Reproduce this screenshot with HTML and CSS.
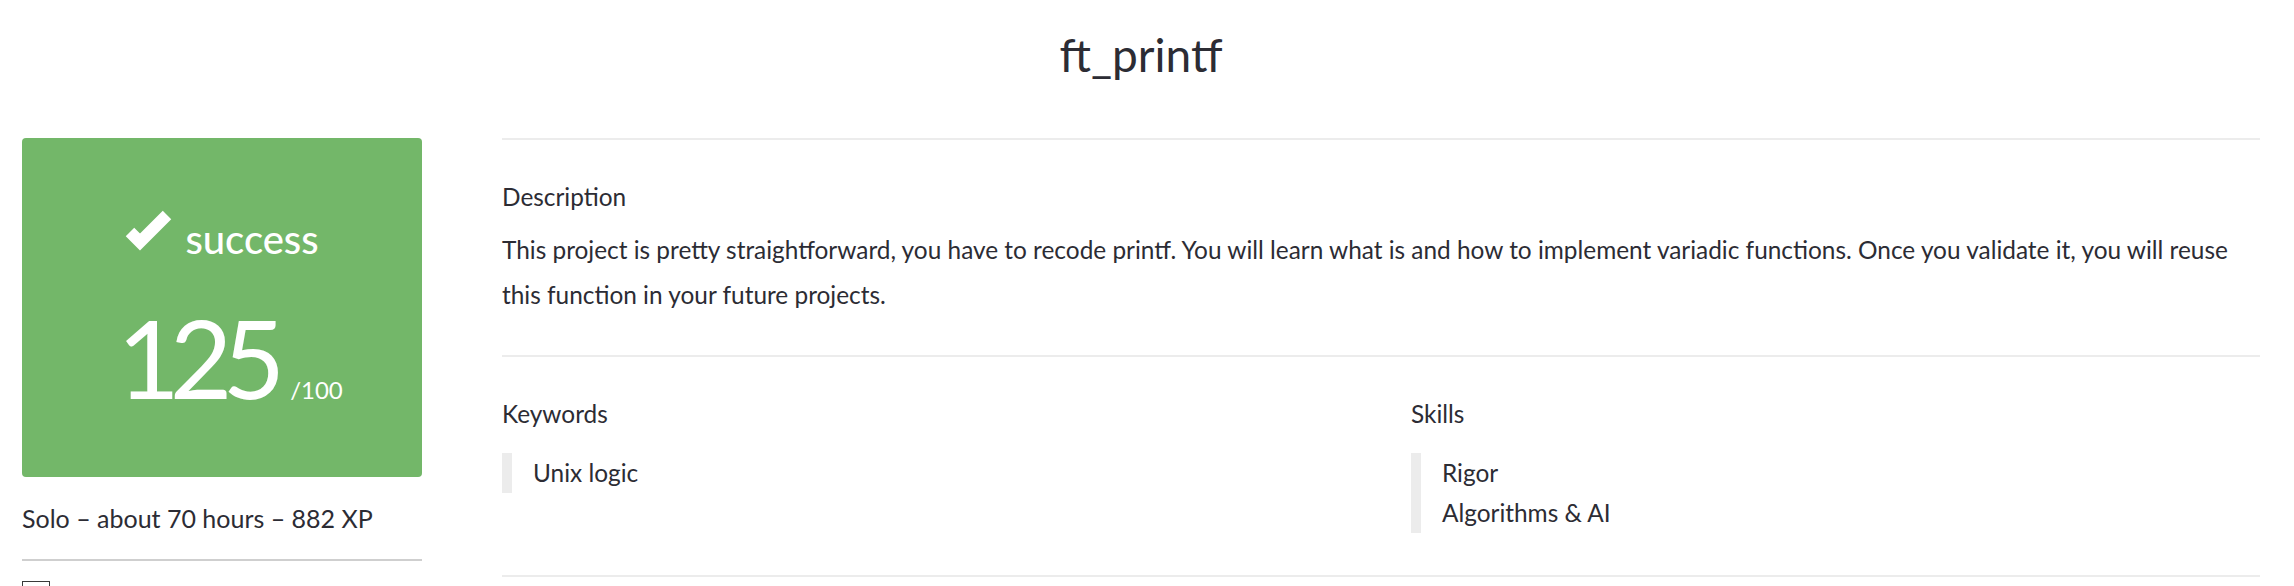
FILE: index.html
```html
<!DOCTYPE html>
<html lang="en">
<head>
<meta charset="utf-8">
<title>ft_printf</title>
<link rel="stylesheet" href="styles.css">
</head>
<body>
<h1 class="title">ft_printf</h1>
<div class="layout">
  <aside class="side">
    <div class="mark">
      <div class="status">
        <svg class="check" width="48" height="41" viewBox="0 0 48 41" aria-hidden="true"><polyline points="5,22 15,32 42,5" fill="none" stroke="#fff" stroke-width="12" stroke-linejoin="miter" stroke-miterlimit="10"/></svg>
        <span class="status-text">success</span>
      </div>
      <div class="score"><span class="score-num">125</span><span class="score-max">/100</span></div>
    </div>
    <div class="meta">Solo – about 70 hours – 882 XP</div>
    <div class="side-rule"></div>
    <div class="checkbox"></div>
  </aside>
  <main class="main">
    <section class="section">
      <div class="label">Description</div>
      <p class="desc">This project is pretty straightforward, you have to recode printf. You will learn what is and how to implement variadic functions. Once you validate it, you will reuse this function in your future projects.</p>
    </section>
    <section class="section section-last">
      <div class="cols">
        <div class="col">
          <div class="label">Keywords</div>
          <ul class="tags"><li>Unix logic</li></ul>
        </div>
        <div class="col">
          <div class="label">Skills</div>
          <ul class="tags"><li>Rigor</li><li>Algorithms &amp; AI</li></ul>
        </div>
      </div>
    </section>
  </main>
</div>
</body>
</html>
```
FILE: styles.css
```css
html, body {
  background: #fff;
}
body {
  margin: 0;
  padding: 27px 34px 0 22px;
  font-family: "Lato", "Liberation Sans", sans-serif;
  color: #2c2c34;
  overflow: hidden;
  height: 586px;
  box-sizing: border-box;
}
.title {
  margin: 0;
  text-align: center;
  font-size: 46px;
  line-height: 56px;
  font-weight: 400;
}
.layout {
  display: flex;
  align-items: flex-start;
  gap: 80px;
  margin-top: 55px;
}
.side {
  flex: none;
  width: 400px;
}
.mark {
  box-sizing: border-box;
  height: 339px;
  padding-top: 77px;
  background: #73b769;
  border-radius: 4px;
  color: #fff;
}
.status {
  display: flex;
  justify-content: center;
  align-items: flex-start;
  gap: 12px;
  height: 48px;
}
.check {
  margin-top: -5px;
  flex: none;
}
.status-text {
  font-size: 40px;
  line-height: 48px;
  font-weight: 500;
}
.score {
  display: flex;
  justify-content: center;
  align-items: baseline;
  margin-top: 42px;
  padding-left: 16px;
  line-height: 104px;
}
.score-num {
  font-size: 108px;
  font-weight: 400;
  letter-spacing: -10px;
}
.score-max {
  font-size: 24px;
  line-height: 24px;
  margin-left: 15px;
  font-weight: 400;
}
.meta {
  margin-top: 21px;
  font-size: 25px;
  line-height: 40px;
}
.side-rule {
  margin-top: 21px;
  border-top: 2px solid #cfcfcf;
}
.checkbox {
  margin-top: 20px;
  width: 28px;
  height: 28px;
  box-sizing: border-box;
  border: 1px solid #3a3a3a;
}
.main {
  flex: 1;
  min-width: 0;
}
.section {
  border-top: 2px solid #ececec;
  padding: 37px 0 38px;
}
.section-last {
  border-bottom: 2px solid #ececec;
  padding-bottom: 42px;
}
.label {
  font-size: 24.4px;
  line-height: 40px;
}
.desc {
  margin: 10px 0 0;
  font-size: 24.4px;
  line-height: 45px;
}
.cols {
  display: grid;
  grid-template-columns: 1fr 1fr;
  column-gap: 60px;
}
.tags {
  list-style: none;
  margin: 19px 0 0;
  padding: 0 0 0 21px;
  border-left: 10px solid #ececec;
}
.tags li {
  font-size: 24.4px;
  line-height: 40px;
}
```
